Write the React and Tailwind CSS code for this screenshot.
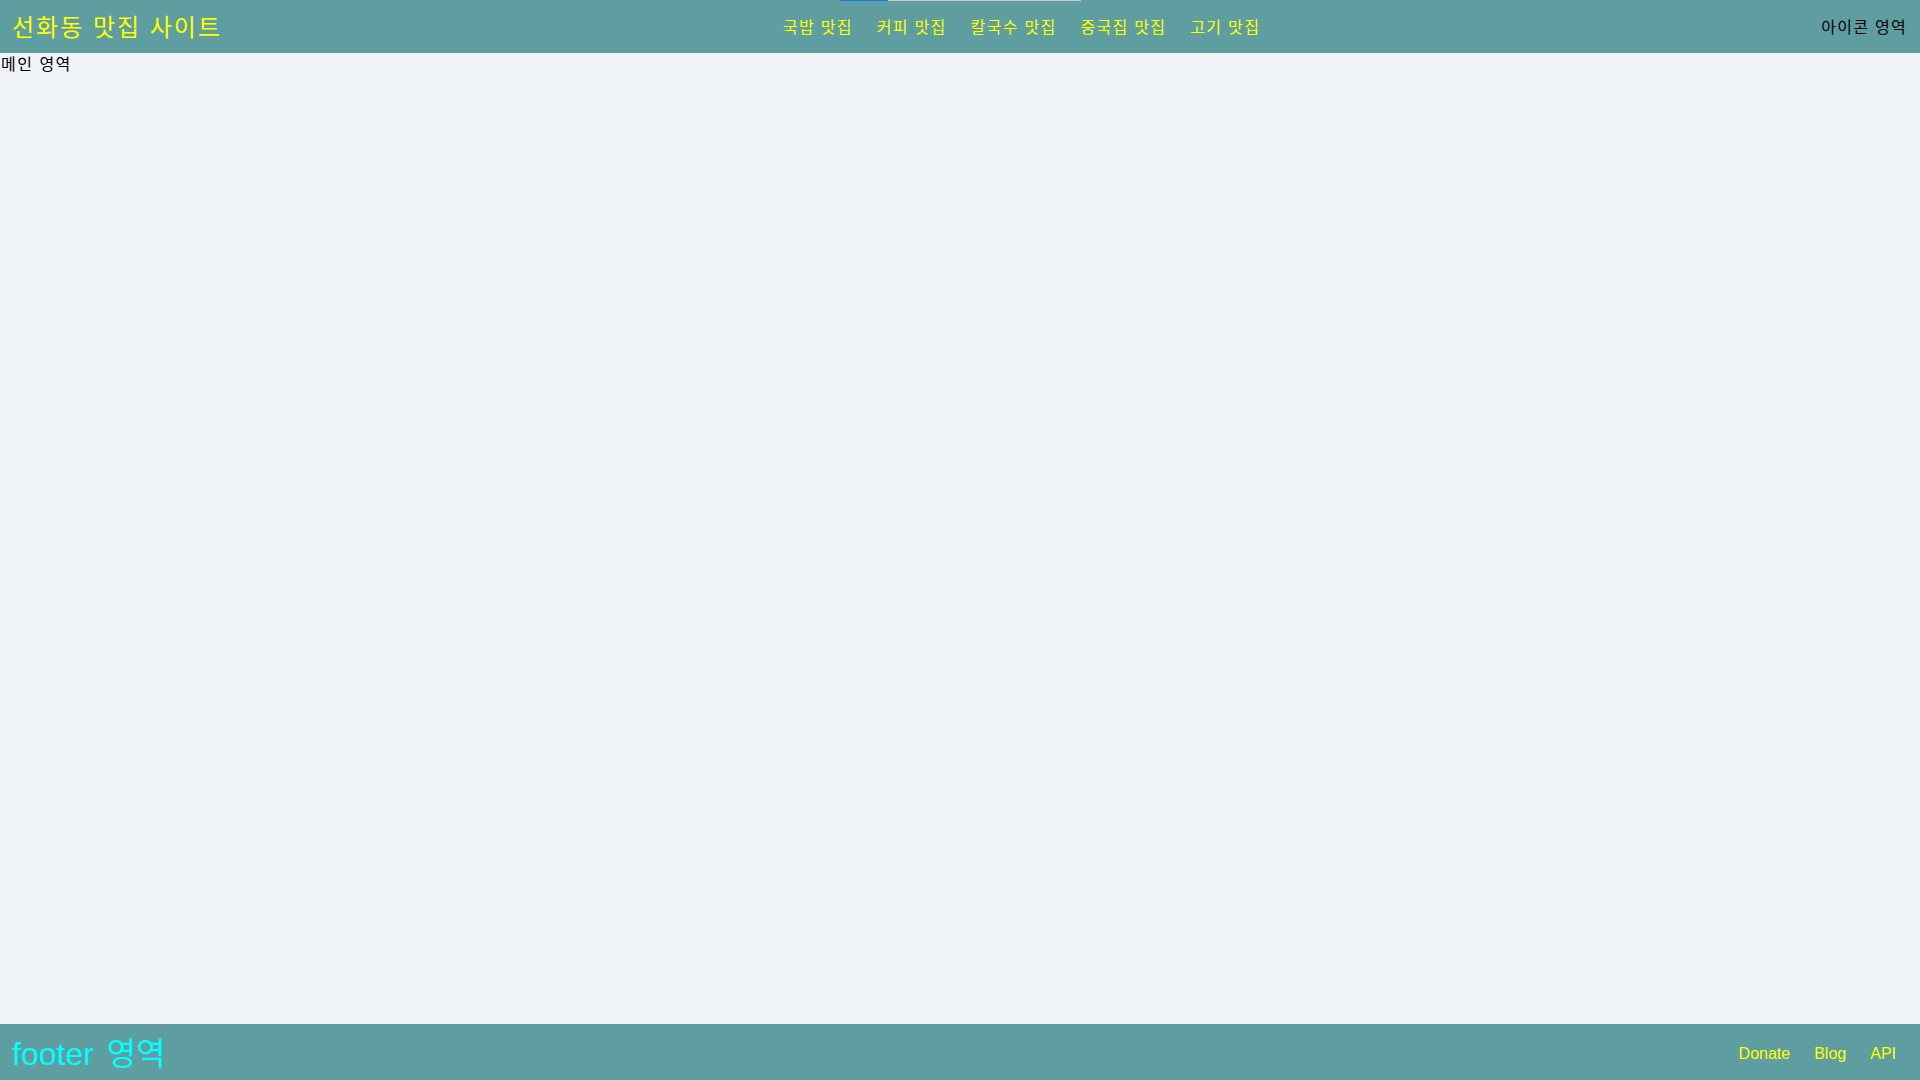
import React from 'react'

const menus = ['국밥 맛집', '커피 맛집', '칼국수 맛집', '중국집 맛집', '고기 맛집']
const links = ['Donate', 'Blog', 'API']

export default function App() {
  return (
    <div className="relative min-h-screen flex flex-col bg-[#eff3f6] font-['Liberation_Sans','Noto_Sans_CJK_KR',sans-serif]">
      {/* 상단 로딩 바 */}
      <div className="absolute top-0 left-[840px] flex h-px">
        <div className="w-[48px] bg-[#1a73e8]" />
        <div className="w-[193px] bg-[#c8c8c8]" />
      </div>

      <header className="h-[53px] flex items-center justify-between pt-[2px] pl-3 pr-[13px] bg-[#5f9ea0]">
        <h2 className="text-[24px] leading-none tracking-[2px] text-[#ffff00]">선화동 맛집 사이트</h2>
        <nav className="flex gap-6 text-[16px] tracking-[1.3px] text-[#ffff00]">
          {menus.map(m => <a key={m}>{m}</a>)}
        </nav>
        <div className="text-[16px] tracking-[1.3px] text-black">아이콘 영역</div>
      </header>

      <main className="flex-1 pl-[1px] pt-[1px] text-[16px] leading-[22px] tracking-[1.5px] text-black">메인 영역</main>

      <footer className="h-[56px] flex items-center justify-between pt-[3px] pl-3 pr-6 bg-[#5f9ea0]">
        <h1 className="text-[32px] leading-none [word-spacing:4px] text-[#00ffff]">footer 영역</h1>
        <div className="flex gap-6 text-[16px] text-[#ffff00]">
          {links.map(l => <a key={l}>{l}</a>)}
        </div>
      </footer>
    </div>
  )
}
